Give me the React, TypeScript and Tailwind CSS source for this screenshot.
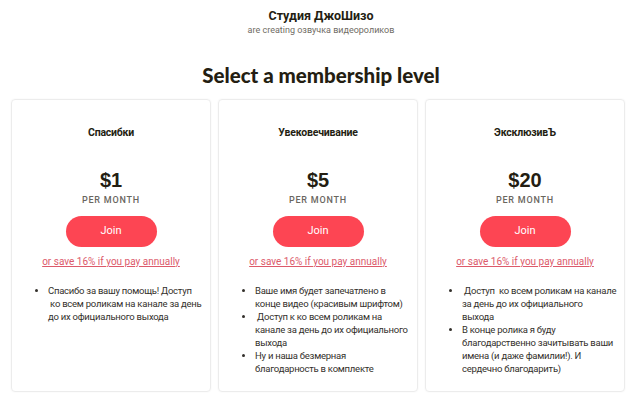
const tiers = [
  {
    name: "Спасибки",
    price: "$1",
    perks: [["Спасибо за вашу помощь! Доступ", "\u00a0ко всем роликам на канале за день", "до их официального выхода"]],
  },
  {
    name: "Увековечивание",
    price: "$5",
    perks: [
      ["Ваше имя будет запечатлено в", "конце видео (красивым шрифтом)"],
      ["\u00a0Доступ к ко всем роликам на", "канале за день до их официального", "выхода"],
      ["Ну и наша безмерная", "благодарность в комплекте"],
    ],
  },
  {
    name: "ЭксклюзивЪ",
    price: "$20",
    perks: [
      ["\u00a0Доступ\u00a0 ко всем роликам на канале", "за день до их официального", "выхода"],
      ["В конце ролика я буду", "благодарственно зачитывать ваши", "имена (и даже фамилии!). И", "сердечно благодарить)"],
    ],
  },
];

export default function App() {
  return (
    <div className="h-[403px] w-[642px] overflow-hidden bg-white font-['Roboto',sans-serif] text-[#241e12]">
      <header className="flex flex-col items-center pt-[7px]">
        <h1 className="text-[12.5px] font-bold leading-[17px]">Студия ДжоШизо</h1>
        <p className="text-[9px] leading-[13px] text-[#706c64]">are creating озвучка видеороликов</p>
        <h2 className="mt-[26px] font-['Lato',sans-serif] text-[20.5px] font-black leading-[25px]">
          Select a membership level
        </h2>
      </header>

      <div className="mt-[11px] flex gap-[7px] pl-[11px]">
        {tiers.map((t) => (
          <div
            key={t.name}
            className="flex h-[293px] w-[200px] shrink-0 flex-col items-center rounded-[4px] border border-[#ececec] shadow-[0_0_2px_rgba(0,0,0,0.05)]"
          >
            <div className="mt-[26px] shrink-0 text-[10.5px] font-bold leading-[14px] tracking-[-0.2px]">{t.name}</div>
            <div className="mt-[28px] shrink-0 font-['Liberation_Sans',sans-serif] text-[20px] font-bold leading-[24px]">
              {t.price}
            </div>
            <div className="mt-[2px] shrink-0 text-[9px] font-medium uppercase leading-[12px] tracking-[0.8px] text-[#6a665e]">
              per month
            </div>
            <button
              type="button"
              className="mt-[10px] h-[31px] w-[91px] shrink-0 rounded-full bg-[#fd4553] text-[11px] font-normal text-white"
            >
              Join
            </button>
            <a className="mt-[8px] shrink-0 text-[10px] leading-[13px] text-[#dc5a6b] underline decoration-[#dc5a6b]">
              or save 16% if you pay annually
            </a>
            <ul className="mt-[16px] w-full shrink-0 list-disc pl-[36px] pr-[4px] text-[9.5px] leading-[13px] tracking-[-0.25px] text-[#33302b]">
              {t.perks.map((lines) => (
                <li key={lines[0]} className="whitespace-nowrap">
                  {lines.map((l, i) => (
                    <span key={i}>
                      {i > 0 && <br />}
                      {l}
                    </span>
                  ))}
                </li>
              ))}
            </ul>
          </div>
        ))}
      </div>
    </div>
  );
}
